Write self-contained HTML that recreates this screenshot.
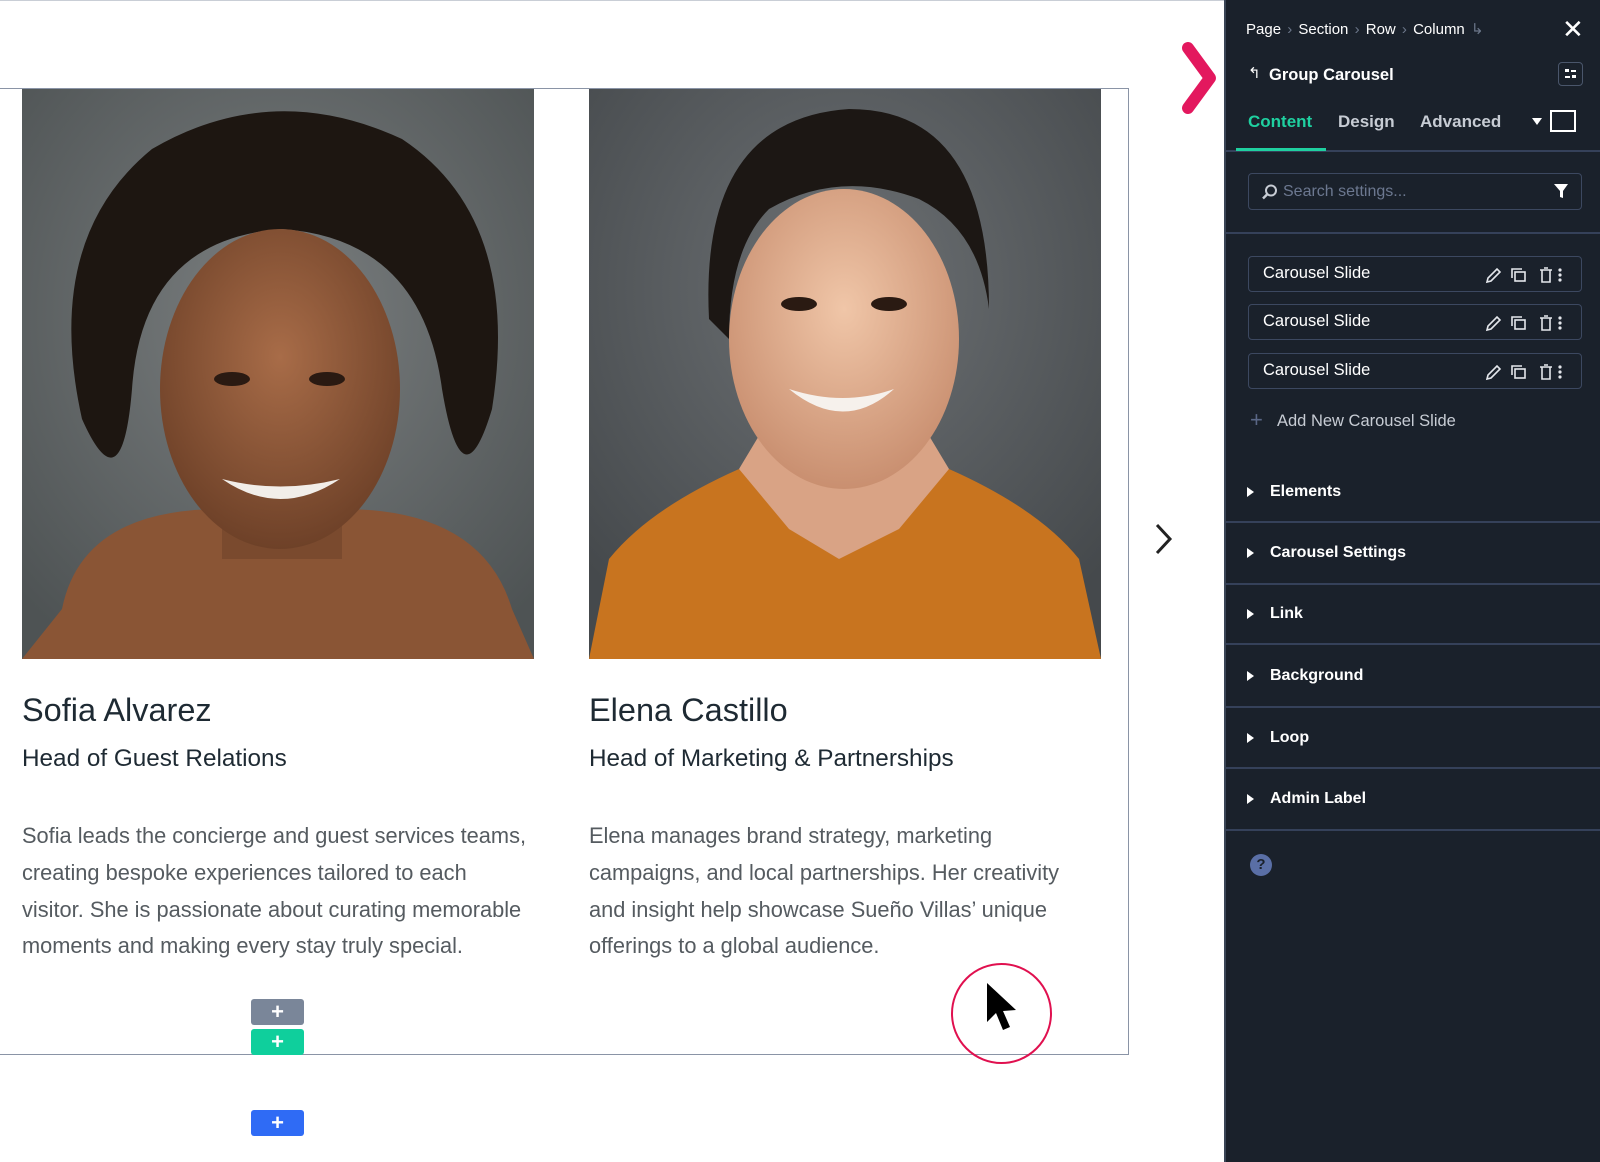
<!DOCTYPE html>
<html><head><meta charset="utf-8">
<style>
*{margin:0;padding:0;box-sizing:border-box}
body{width:1600px;height:1162px;overflow:hidden;background:#fff;font-family:"Liberation Sans",sans-serif;position:relative}
.a{position:absolute}
.name{font-size:32.5px;color:#1e2a33;white-space:nowrap}
.role{font-size:24.3px;color:#1e2a33;white-space:nowrap}
.p{font-size:21.8px;color:#555b60;line-height:36.8px;white-space:nowrap}
.pb{position:absolute;left:251px;width:53px;height:26px;border-radius:3px;color:#fff;font-size:22px;font-weight:bold;text-align:center;line-height:26px}
#panel{left:1224px;top:0;width:376px;height:1162px;background:#1a212b;border-left:2px solid #3a4556}
#panel .t{position:absolute;color:#fff;white-space:nowrap}
.bc{font-size:15px;color:#c7ccd4}
.slide{position:absolute;left:22px;width:334px;height:36px;border:1.5px solid #3c4860;border-radius:4px;color:#fff;font-size:16.5px;padding-left:14px;line-height:33px}
.sec{position:absolute;left:0;width:376px;height:60px;border-bottom:2px solid #35415a}
.sec span{position:absolute;left:44px;color:#fff;font-weight:bold;font-size:16px}
.sec i{position:absolute;left:21px;width:0;height:0;border-left:7px solid #fff;border-top:5px solid transparent;border-bottom:5px solid transparent}
</style></head><body>

<div class="a" style="left:0;top:0;width:1224px;height:1px;background:#c9ced6"></div>
<div class="a" style="left:-2px;top:88px;width:1131px;height:967px;border:1.5px solid #8a94a6"></div>

<svg class="a" style="left:22px;top:89px" width="512" height="570" viewBox="0 0 512 570">
<defs><radialGradient id="g1" cx="50%" cy="40%" r="70%"><stop offset="0" stop-color="#7b7f80"/><stop offset="1" stop-color="#4e5354"/></radialGradient>
<radialGradient id="s1" cx="50%" cy="40%" r="60%"><stop offset="0" stop-color="#a86c48"/><stop offset="1" stop-color="#6e4128"/></radialGradient></defs>
<rect width="512" height="570" fill="url(#g1)"/>
<path d="M40 520 Q60 420 200 420 L320 420 Q460 420 490 520 L512 570 L0 570Z" fill="#8a5535"/>
<rect x="200" y="360" width="120" height="110" fill="#7a4a2e"/>
<path d="M60 330 Q20 150 130 60 Q250 -10 380 50 Q500 130 470 320 Q440 420 420 300 Q400 150 260 140 Q120 150 110 300 Q100 420 60 330Z" fill="#1d1611"/>
<ellipse cx="258" cy="300" rx="120" ry="160" fill="url(#s1)"/>
<path d="M200 390 Q258 430 318 390 Q258 405 200 390Z" fill="#f2eee9"/>
<ellipse cx="210" cy="290" rx="18" ry="7" fill="#2a1a12"/><ellipse cx="305" cy="290" rx="18" ry="7" fill="#2a1a12"/>
</svg>
<svg class="a" style="left:589px;top:89px" width="512" height="570" viewBox="0 0 512 570">
<defs><radialGradient id="g2" cx="50%" cy="35%" r="70%"><stop offset="0" stop-color="#6d7174"/><stop offset="1" stop-color="#45494c"/></radialGradient>
<radialGradient id="s2" cx="50%" cy="40%" r="60%"><stop offset="0" stop-color="#f0c6a8"/><stop offset="1" stop-color="#c98f70"/></radialGradient></defs>
<rect width="512" height="570" fill="url(#g2)"/>
<path d="M0 570 L20 470 Q60 420 150 380 L250 470 L360 380 Q450 420 490 470 L512 570Z" fill="#c8741f"/>
<path d="M150 380 L200 440 L250 470 L310 440 L360 380 L330 330 L180 330Z" fill="#d9a385"/>
<path d="M120 230 Q110 30 260 20 Q400 20 400 220 Q390 140 330 110 Q250 80 180 120 Q140 160 140 250Z" fill="#1c1714"/>
<ellipse cx="255" cy="250" rx="115" ry="150" fill="url(#s2)"/>
<path d="M200 300 Q255 345 305 300 Q255 318 200 300Z" fill="#f6f1ec"/>
<ellipse cx="210" cy="215" rx="18" ry="7" fill="#2a1a12"/><ellipse cx="300" cy="215" rx="18" ry="7" fill="#2a1a12"/>
</svg>

<div class="a name" style="left:22px;top:692px">Sofia Alvarez</div>
<div class="a role" style="left:22px;top:745px">Head of Guest Relations</div>
<div class="a p" style="left:22px;top:818px">Sofia leads the concierge and guest services teams,<br>creating bespoke experiences tailored to each<br>visitor. She is passionate about curating memorable<br>moments and making every stay truly special.</div>

<div class="a name" style="left:589px;top:692px">Elena Castillo</div>
<div class="a role" style="left:589px;top:745px">Head of Marketing &amp; Partnerships</div>
<div class="a p" style="left:589px;top:818px">Elena manages brand strategy, marketing<br>campaigns, and local partnerships. Her creativity<br>and insight help showcase Sueño Villas’ unique<br>offerings to a global audience.</div>

<div class="pb" style="top:999px;background:#7a8699">+</div>
<div class="pb" style="top:1029px;background:#0fcf9c">+</div>
<div class="pb" style="top:1110px;background:#2f6bf5">+</div>

<svg class="a" style="left:1152px;top:522px" width="24" height="34"><path d="M5 3 L18 17 L5 31" stroke="#222" stroke-width="3" fill="none"/></svg>
<div class="a" style="left:951px;top:963px;width:101px;height:101px;border:2px solid #e0104f;border-radius:50%"></div>
<svg class="a" style="left:984px;top:980px" width="40" height="60"><path d="M3 3 L3 42 L12 33 L19 50 L26 47 L19 31 L32 30 Z" fill="#000"/></svg>
<svg class="a" style="left:1180px;top:42px" width="40" height="72"><path d="M8 6 L30 36 L8 66" stroke="#e3185e" stroke-width="12" fill="none" stroke-linejoin="round" stroke-linecap="round"/></svg>

<div id="panel" class="a">
 <div class="t bc" style="left:20px;top:20px;word-spacing:2px">Page <span style="color:#6b7689">›</span> Section <span style="color:#6b7689">›</span> Row <span style="color:#6b7689">›</span> Column <span style="color:#6b7689">↳</span></div>
 <div class="t" style="left:336px;top:14px;font-size:26px">✕</div>
 <div class="t" style="left:22px;top:64px;font-size:15px">↰</div>
 <div class="t" style="left:43px;top:66px;font-size:16.5px;font-weight:bold">Group Carousel</div>
 <div class="a" style="left:332px;top:62px;width:25px;height:24px;border:1.5px solid #4a566b;border-radius:4px"></div>
 <div class="a" style="left:339px;top:69px;width:4px;height:3px;background:#fff"></div>
 <div class="a" style="left:345px;top:70px;width:5px;height:2px;background:#fff"></div>
 <div class="a" style="left:339px;top:76px;width:5px;height:2px;background:#fff"></div>
 <div class="a" style="left:346px;top:75px;width:4px;height:3px;background:#fff"></div>
 <div class="t" style="left:22px;top:112px;font-size:17px;font-weight:bold;color:#1fd0a0">Content</div>
 <div class="t" style="left:112px;top:112px;font-size:17px;font-weight:bold;color:#c7ccd4">Design</div>
 <div class="t" style="left:194px;top:112px;font-size:17px;font-weight:bold;color:#c7ccd4">Advanced</div>
 <div class="a" style="left:306px;top:118px;border-top:7px solid #fff;border-left:5px solid transparent;border-right:5px solid transparent"></div>
 <div class="a" style="left:324px;top:110px;width:26px;height:22px;border:2.5px solid #fff"></div>
 <div class="a" style="left:0;top:150px;width:376px;height:2px;background:#35415a"></div>
 <div class="a" style="left:10px;top:148px;width:90px;height:3px;background:#1fd0a0"></div>
 <div class="a" style="left:22px;top:173px;width:334px;height:37px;border:1.5px solid #3c4860;border-radius:4px"></div>
 <svg class="a" style="left:35px;top:183px" width="18" height="18"><circle cx="10" cy="7.5" r="5" stroke="#c7ccd4" stroke-width="2" fill="none"/><path d="M6.5 11 L2 15.5" stroke="#c7ccd4" stroke-width="2.5"/></svg>
 <div class="t" style="left:57px;top:183px;font-size:16px;color:#6c7890">Search settings...</div>
 <svg class="a" style="left:327px;top:183px" width="16" height="16"><path d="M1 1 H15 L10 8 V15 L7 14 V8 Z" fill="#fff"/></svg>
 <div class="a" style="left:0;top:232px;width:376px;height:2px;background:#35415a"></div>
 <div class="slide" style="top:256px">Carousel Slide</div>
 <div class="slide" style="top:304px">Carousel Slide</div>
 <div class="slide" style="top:353px">Carousel Slide</div>
 <svg class="a" style="left:258px;top:266px" width="100" height="120">
  <g stroke="#e4e7ec" stroke-width="1.6" fill="none">
   <g id="ics"><path d="M3 16 L4 12 L13 3 L16 6 L7 15 Z"/><rect x="31" y="6" width="10" height="9"/><path d="M28 12 V3 H38"/><path d="M56 4 H68 M58 4 V16 H66 V4 M60 2 H64"/><circle cx="76" cy="4" r="0.8"/><circle cx="76" cy="9" r="0.8"/><circle cx="76" cy="14" r="0.8"/></g>
   <use href="#ics" y="48"/><use href="#ics" y="97"/>
  </g></svg>
 <div class="t" style="left:24px;top:407px;font-size:22px;color:#5a6786">+</div>
 <div class="t" style="left:51px;top:412px;font-size:16.5px;color:#c7ccd4">Add New Carousel Slide</div>
 <div class="sec" style="top:463px"><i style="top:24px"></i><span style="top:20px">Elements</span></div>
 <div class="sec" style="top:524px;height:61px"><i style="top:24px"></i><span style="top:20px">Carousel Settings</span></div>
 <div class="sec" style="top:585px"><i style="top:24px"></i><span style="top:20px">Link</span></div>
 <div class="sec" style="top:645px;height:63px"><i style="top:26px"></i><span style="top:22px">Background</span></div>
 <div class="sec" style="top:708px;height:61px"><i style="top:25px"></i><span style="top:21px">Loop</span></div>
 <div class="sec" style="top:769px;height:62px"><i style="top:25px"></i><span style="top:21px">Admin Label</span></div>
 <div class="a" style="left:24px;top:854px;width:22px;height:22px;border-radius:50%;background:#5a6fa6;color:#1a212b;font-size:15px;font-weight:bold;text-align:center;line-height:22px">?</div>
</div>
</body></html>
